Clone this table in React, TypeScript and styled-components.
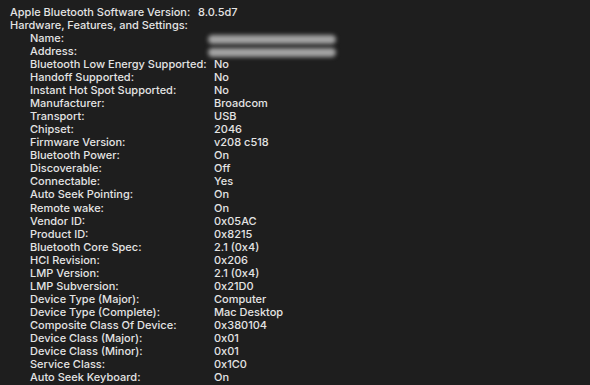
import React from "react";
import styled, { createGlobalStyle } from "styled-components";

const GlobalStyle = createGlobalStyle`
  html, body {
    margin: 0;
    padding: 0;
    background: #1e1e1e;
  }
`;

const Page = styled.div`
  width: 590px;
  height: 385px;
  box-sizing: border-box;
  padding: 6px 0 0 10px;
  background: #1e1e1e;
  color: #e4e4e4;
  font-family: Inter, "Liberation Sans", sans-serif;
  font-size: 11px;
  font-weight: 500;
  line-height: 13.04px;
  overflow: hidden;
`;

const TopRow = styled.div`
  display: grid;
  grid-template-columns: 188px auto;
`;

const Section = styled.div`
  padding-left: 20px;
`;

const Row = styled.div`
  display: grid;
  grid-template-columns: 184px auto;
  height: 13.04px;
`;

const Blurred = styled.span`
  display: block;
  width: 128px;
  height: 9px;
  margin: 3px 0 0 -6px;
  border-radius: 5px;
  background: #a4a4a4;
  filter: blur(2.2px);
`;

const rows: [string, string | null][] = [
  ["Name:", null],
  ["Address:", null],
  ["Bluetooth Low Energy Supported:", "No"],
  ["Handoff Supported:", "No"],
  ["Instant Hot Spot Supported:", "No"],
  ["Manufacturer:", "Broadcom"],
  ["Transport:", "USB"],
  ["Chipset:", "2046"],
  ["Firmware Version:", "v208 c518"],
  ["Bluetooth Power:", "On"],
  ["Discoverable:", "Off"],
  ["Connectable:", "Yes"],
  ["Auto Seek Pointing:", "On"],
  ["Remote wake:", "On"],
  ["Vendor ID:", "0x05AC"],
  ["Product ID:", "0x8215"],
  ["Bluetooth Core Spec:", "2.1 (0x4)"],
  ["HCI Revision:", "0x206"],
  ["LMP Version:", "2.1 (0x4)"],
  ["LMP Subversion:", "0x21D0"],
  ["Device Type (Major):", "Computer"],
  ["Device Type (Complete):", "Mac Desktop"],
  ["Composite Class Of Device:", "0x380104"],
  ["Device Class (Major):", "0x01"],
  ["Device Class (Minor):", "0x01"],
  ["Service Class:", "0x1C0"],
  ["Auto Seek Keyboard:", "On"],
];

const App = () => {
  return (
    <Page>
      <GlobalStyle />
      <TopRow>
        <span>Apple Bluetooth Software Version:</span>
        <span>8.0.5d7</span>
      </TopRow>
      <div>Hardware, Features, and Settings:</div>
      <Section>
        {rows.map(([label, value]) => (
          <Row key={label}>
            <span>{label}</span>
            {value === null ? <Blurred /> : <span>{value}</span>}
          </Row>
        ))}
      </Section>
    </Page>
  );
};

export default App;
